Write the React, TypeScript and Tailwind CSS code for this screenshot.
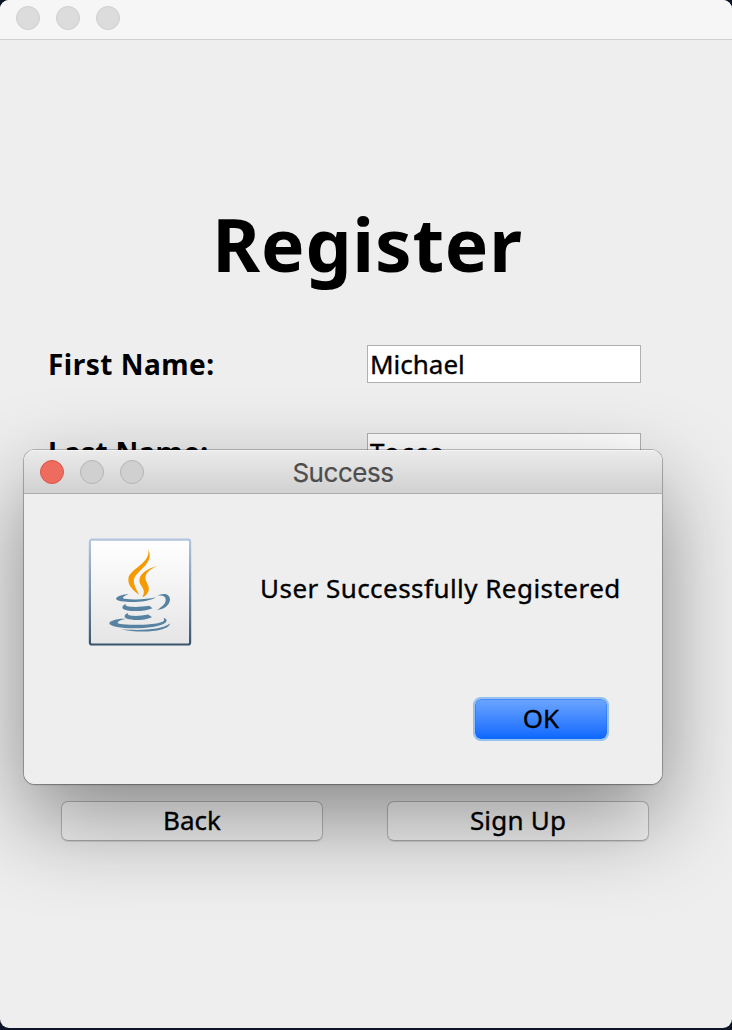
import React from 'react';

function Dot({ className }: { className: string }) {
  return <span className={`block size-6 rounded-full border ${className}`} />;
}

function Field({ label, value, labelClass, valueClass }: { label: string; value: string; labelClass: string; valueClass: string }) {
  return (
    <div className="flex h-[38px] items-center">
      <label className={`w-[319px] whitespace-nowrap text-[28px] leading-[36px] font-bold ${labelClass}`}>{label}</label>
      <div className="h-[38px] w-[274px] border border-[#b0b0b0] bg-white pl-[2px]">
        <span className={`block whitespace-nowrap text-[26px] leading-[36px] [-webkit-text-stroke:0.35px_black] ${valueClass}`}>{value}</span>
      </div>
    </div>
  );
}

function FormButton({ children, textClass }: { children: string; textClass: string }) {
  return (
    <button className="flex h-[40px] w-[262px] items-center justify-center rounded-[7px] border border-[#bcbcbc] border-b-[#acacac] bg-linear-to-b from-white to-[#f6f6f6] pb-px shadow-[0_1px_1px_rgba(0,0,0,0.12)]">
      <span className={`text-[26px] leading-[37px] [-webkit-text-stroke:0.35px_black] ${textClass}`}>{children}</span>
    </button>
  );
}

function JavaIcon() {
  return (
    <svg width="104" height="108" viewBox="0 0 104 108" fill="none">
      <defs>
        <linearGradient id="frame" x1="0" y1="0" x2="0" y2="1">
          <stop offset="0" stopColor="#b4c5df" />
          <stop offset="0.5" stopColor="#7893b1" />
          <stop offset="1" stopColor="#38546d" />
        </linearGradient>
        <linearGradient id="paper" x1="0" y1="0" x2="0" y2="1">
          <stop offset="0" stopColor="#ffffff" />
          <stop offset="1" stopColor="#e5e5e5" />
        </linearGradient>
      </defs>
      <rect x="1.9" y="1.7" width="100.2" height="104.8" rx="2" fill="url(#paper)" stroke="url(#frame)" strokeWidth="2.2" />
      <path d="M60.300 11.300C65 22 57 28 50 35C43.500 41 45 46 51.500 57C43 51 39.500 46 40.500 40C42 31 63 25 60.300 11.300Z" fill="#f59a00" />
      <path d="M69.500 28C60 32 57 36 57.500 41C58 45 62 48 60.500 53C59.500 56 57 58.500 54.300 59.300C57 54 56 52 53.500 48C47.500 39 56 31.500 69.500 28Z" fill="#f59a00" />
      <g fill="#5882a1">
        <path d="M40.500 56.300C36 58 33 60 36.500 60.800C46 62 59 61.500 68 59.300C62 63 51 64.300 42 64C33 63.700 26 62 28.500 59.700C30.500 57.500 36 56.500 40.500 56.300Z" />
        <path d="M68.700 58C75 54.300 82 55.500 82 61.500C81.500 67.500 76 71.300 69 72C76 67.500 78.500 64.500 77.500 60.500C76.500 57.500 73 57.200 68.700 58Z" />
        <path d="M38 66C35 69 48 69.800 61.300 67.800L64.500 70.200C56 74 38 74 34.700 70.500C33.800 68.500 35.500 66.700 38 66Z" />
        <path d="M40 75C37.500 78.300 50 78.800 60.300 76.500L64 79.200C55 83 40 83 37 79.300C36 77.500 37.700 75.800 40 75Z" />
        <path d="M38 81C33 81.300 27 84.500 31 85.800C44 88 68 86.500 74 84C77 82.700 76 81 75.500 80C79 80.500 79.500 83 77 85C70 90.500 42 91.500 29 89C19 87 20 84 25 82.500C29 81 34 80.500 38 81Z" />
        <path d="M32.500 91C49 93 74 92 82 85.500C81 93.500 52 96 32.500 91Z" />
      </g>
    </svg>
  );
}

function SuccessDialog() {
  return (
    <section className="absolute top-[450px] left-6 flex h-[334px] w-[638px] flex-col overflow-hidden rounded-[11px] bg-[#eeeeee]">
      <header className="relative flex h-11 shrink-0 items-center border-b border-[#adadad] bg-linear-to-b from-[#ebebeb] to-[#d1d1d1] pl-4 shadow-[inset_0_1px_0_#f4f4f4]">
        <div className="flex gap-4">
          <Dot className="border-[#da5349] bg-[#ed6b5f]" />
          <Dot className="border-[#b4b4b4] bg-[#d0d0d0]" />
          <Dot className="border-[#b4b4b4] bg-[#d0d0d0]" />
        </div>
        <h2 className="absolute inset-x-0 top-[2px] text-center font-['Inter',sans-serif] text-[26px] leading-[42px] tracking-[-0.45px] text-[#4d4d4d] [-webkit-text-stroke:0.2px_#4d4d4d]">Success</h2>
      </header>
      <div className="flex pt-[44px] pl-[64px]">
        <JavaIcon />
        <p className="mt-[32px] ml-[68px] whitespace-nowrap text-[26px] leading-[37px] tracking-[0.46px] [-webkit-text-stroke:0.35px_black]">User Successfully Registered</p>
      </div>
      <div className="mt-[51px] flex justify-end pr-[53px]">
        <button className="flex h-[44px] w-[136px] items-center justify-center rounded-[8px] border-2 border-[#94c1f1] bg-linear-to-b from-[#6ba5ff] to-[#0566ff] bg-clip-padding pb-[2px] shadow-[inset_0_0_0_1px_rgba(30,110,240,0.45)]">
          <span className="text-[26px] leading-[37px] [-webkit-text-stroke:0.35px_black]">OK</span>
        </button>
      </div>
    </section>
  );
}

export default function App() {
  return (
    <div className="relative h-[1030px] w-[732px] overflow-hidden bg-[#0c1428] font-['Noto_Sans',sans-serif] text-black">
      <main className="flex h-[1028px] flex-col overflow-hidden rounded-[9px] bg-[#eeeeee]">
        <header className="flex h-10 shrink-0 gap-4 border-b border-[#d0d0d0] bg-[#f6f6f6] pt-[6px] pl-4">
          <Dot className="border-[#cecece] bg-[#dcdcdc]" />
          <Dot className="border-[#cecece] bg-[#dcdcdc]" />
          <Dot className="border-[#cecece] bg-[#dcdcdc]" />
        </header>
        <h1 className="mt-[164px] pl-[3px] text-center text-[73px] leading-[80px] font-bold tracking-[0.8px]">Register</h1>
        <form className="mt-[61px] flex flex-col gap-[50px] pl-12">
          <Field label="First Name:" value="Michael" labelClass="tracking-[0.5px]" valueClass="" />
          <Field label="Last Name:" value="Tocco" labelClass="tracking-[0.3px]" valueClass="tracking-[1.3px]" />
        </form>
        <div className="mt-[330px] flex gap-[64px] pl-[61px]">
          <FormButton textClass="">Back</FormButton>
          <FormButton textClass="tracking-[0.2px]">Sign Up</FormButton>
        </div>
      </main>
      <div className="pointer-events-none absolute inset-x-0 top-0 h-[1028px] overflow-hidden rounded-[9px]">
        <div className="absolute top-[450px] left-6 h-[334px] w-[638px] rounded-[11px] shadow-[0_0_0_1px_rgba(0,0,0,0.22),0_1px_2px_rgba(0,0,0,0.18),0_36px_90px_rgba(0,0,0,0.43)]" />
      </div>
      <SuccessDialog />
    </div>
  );
}
